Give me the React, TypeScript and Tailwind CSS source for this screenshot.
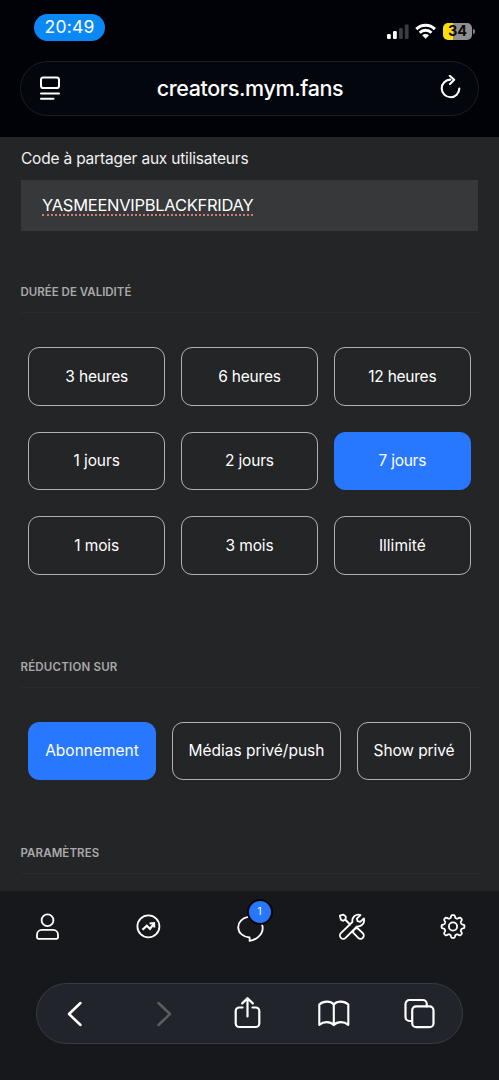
import React from "react";

const SANS = "font-['Inter','Liberation_Sans',sans-serif]";

const line = {
  fill: "none",
  stroke: "#fff",
  strokeLinecap: "round" as const,
  strokeLinejoin: "round" as const,
};

const gearPath = (() => {
  const points: string[] = [];
  for (let i = 0; i < 160; i++) {
    const a = (i / 160) * Math.PI * 2;
    const r = 10.1 + 1.4 * Math.tanh(2 * Math.cos(8 * a));
    points.push(`${(14 + r * Math.sin(a)).toFixed(2)} ${(14 - r * Math.cos(a)).toFixed(2)}`);
  }
  return `M${points.join("L")}Z`;
})();

function StatusBar() {
  return (
    <div className="flex h-[60.5px] items-start justify-between pl-[34px] pr-[24px]">
      <div className="mt-[14px] flex h-[27px] w-[71px] items-center justify-center rounded-full bg-[#0a88f5] text-[17.5px] tracking-[0.2px] text-white">
        20:49
      </div>
      <div className="mt-[22px] flex items-center">
        <svg width="24" height="18" viewBox="0 0 24 18">
          <rect x="0" y="12" width="3.8" height="5" rx="1.2" fill="#fff" />
          <rect x="6" y="9" width="3.8" height="8" rx="1.2" fill="#fff" />
          <rect x="12" y="6" width="3.8" height="11" rx="1.2" fill="#3b3c3f" />
          <rect x="17.8" y="2.5" width="3.8" height="14.5" rx="1.2" fill="#3b3c3f" />
        </svg>
        <svg className="ml-[4px]" width="22" height="18" viewBox="0 0 22 18">
          <g fill="none" stroke="#fff" strokeWidth="2.9">
            <path d="M1.3 7.1a13.2 13.2 0 0 1 18.6 0" />
            <path d="M4.7 10.7a8.3 8.3 0 0 1 11.8 0" />
          </g>
          <path d="M7.2 13.3a4.9 4.9 0 0 1 6.8 0L10.6 16.8Z" fill="#fff" />
        </svg>
        <div className="ml-[6px] flex h-[17px] w-[29px] items-center justify-center rounded-[5px] bg-linear-to-r from-[#ffdc0c] from-36% to-[#8f8f91] to-36% text-[14.5px] font-bold leading-none text-[#0b0b0b]">
          34
        </div>
        <div className="ml-px h-[5px] w-[2px] rounded-r-full bg-[#858587]" />
      </div>
    </div>
  );
}

function AddressBar() {
  return (
    <div className="mx-[20px] flex h-[55.5px] items-center justify-between rounded-full border border-[#1b1e23] bg-[#03060d] pl-[18px] pr-[17px]">
      <svg width="22" height="26" viewBox="0 0 22 26" {...line} strokeWidth="2">
        <rect x="2" y="2.4" width="18" height="10.7" rx="2.4" />
        <path d="M2 18.4h18M2 23.7h12.5" />
      </svg>
      <span className="text-[21.5px] font-medium tracking-[-0.38px] text-white">creators.mym.fans</span>
      <svg width="22" height="26" viewBox="0 0 22 26" {...line} strokeWidth="2.1">
        <path d="M11.4 4.600A8.8 8.8 0 1 0 20.3 13.500" />
        <path d="M10.8 .8l4.400 4-4.200 4.100" />
      </svg>
    </div>
  );
}

function SectionTitle({ children, tracking }: { children: React.ReactNode; tracking: string }) {
  return (
    <h2 className={`-ml-[0.5px] h-[32px] border-b border-[#2a2b2d] text-[11.5px] font-semibold leading-[22px] text-[#a9a9ab] ${tracking}`}>
      {children}
    </h2>
  );
}

function Choice({ label, active, className = "" }: { label: string; active?: boolean; className?: string }) {
  return (
    <button
      className={`flex h-[58.5px] items-center justify-center rounded-[11px] border text-[15.5px] text-white ${
        active ? "border-[#2878ff] bg-[#2878ff]" : "border-[#b0b1b2]"
      } ${className}`}
    >
      {label}
    </button>
  );
}

const durations = [
  { label: "3 heures", tracking: "tracking-[-0.18px]" },
  { label: "6 heures", tracking: "tracking-[-0.18px]" },
  { label: "12 heures", tracking: "tracking-[-0.25px]" },
  { label: "1 jours", tracking: "tracking-[-0.1px]" },
  { label: "2 jours", tracking: "tracking-[-0.18px]" },
  { label: "7 jours", tracking: "tracking-[-0.25px]" },
  { label: "1 mois", tracking: "tracking-[-0.1px]" },
  { label: "3 mois", tracking: "tracking-[-0.1px]" },
  { label: "Illimité", tracking: "tracking-[0px]" },
];

function Content() {
  return (
    <main className="flex h-[753.5px] flex-col overflow-hidden bg-[#242527] px-[21px]">
      <label className="mt-[10px] h-[24px] whitespace-nowrap text-[15.5px] leading-[24px] tracking-[-0.2px] text-[#f1f1f1]">
        Code à partager aux utilisateurs
      </label>
      <div className="mt-[9px] flex h-[51px] items-center bg-[#37383a] pl-[21px]">
        <span className="border-b-2 border-dotted border-[#cf7d76] text-[16.5px] leading-[18px] tracking-[-0.27px] text-white">
          YASMEENVIPBLACKFRIDAY
        </span>
      </div>
      <div className="mt-[50px]">
        <SectionTitle tracking="tracking-[0px]">DURÉE DE VALIDITÉ</SectionTitle>
      </div>
      <div className="mx-[7px] mt-[34px] grid grid-cols-3 gap-x-[15.5px] gap-y-[26px]">
        {durations.map(({ label, tracking }) => (
          <Choice key={label} label={label} active={label === "7 jours"} className={tracking} />
        ))}
      </div>
      <div className="mt-[81px]">
        <SectionTitle tracking="tracking-[0.2px]">RÉDUCTION SUR</SectionTitle>
      </div>
      <div className="mx-[7px] mt-[34px] flex justify-between whitespace-nowrap">
        <Choice label="Abonnement" active className="w-[128px]" />
        <Choice label="Médias privé/push" className="w-[169px]" />
        <Choice label="Show privé" className="w-[114px] tracking-[-0.1px]" />
      </div>
      <div className="mt-[62px]">
        <SectionTitle tracking="tracking-[0.1px]">PARAMÈTRES</SectionTitle>
      </div>
    </main>
  );
}

function TabBar() {
  return (
    <nav className="flex h-[72px] items-center justify-between pl-[33px] pr-[32px]">
      <svg width="28" height="28" viewBox="0 0 28 28" {...line} strokeWidth="1.8">
        <circle cx="14.5" cy="7.3" r="5.9" />
        <path d="M8.8 16.9h11.4a4.8 4.8 0 0 1 4.8 4.8v2.6a1.5 1.5 0 0 1-1.5 1.5h-18A1.5 1.5 0 0 1 4 24.3v-2.6a4.8 4.8 0 0 1 4.8-4.8Z" />
      </svg>
      <svg width="28" height="28" viewBox="0 0 28 28" {...line} strokeWidth="1.8">
        <circle cx="13.4" cy="13.4" r="11" />
        <path d="M7.5 16.8l4.3-4.1 3.2 3.1 3.500-4.600" strokeWidth="2.2" strokeLinecap="butt" strokeLinejoin="miter" />
        <path d="M14.600 10.500l4.500-.4.200 4.400" strokeWidth="2" strokeLinejoin="miter" strokeLinecap="butt" />
      </svg>
      <div className="relative">
        <svg className="overflow-visible" width="28" height="28" viewBox="0 0 28 28" {...line} strokeWidth="1.8">
          <path d="M12.3 3.9C6.7 4.7 2.2 9.100 2.2 14.200c0 5.800 5.300 9.900 11.400 10.300v3.400c6.600-1 13.100-5.900 13.100-12.900 0-1.100-.2-2.200-.6-3.200" />
        </svg>
        <span className="absolute -top-[14px] left-[10.5px] flex size-[26px] items-center justify-center rounded-full border-2 border-[#04060c] bg-[#2878ff] text-[10px] text-white">
          1
        </span>
      </div>
      <svg width="28" height="28" viewBox="0 0 28 28" {...line} strokeWidth="1.8">
        <path d="M1.8 2.6l3.700-1 2.300 2-.2 2.700-2.300 1.500-2.300-.9L1.800 2.600ZM7.100 6.500l5 5" />
        <path d="M17.5 15.800l1.800-.8 5.500 5.200a3.200 3.200 0 0 1-4.600 4.700l-5.300-5.500.8-2" />
        <path d="M22.500 2.100c-4.400-1.500-8.800 1.700-8.100 6.900L2.900 20.100a3.300 3.300 0 0 0 4.700 4.700l11.300-11.300c4.600.6 8.200-3.400 7-8l-3.700 3.300-2.600-.6-.8-2.600Z" />
      </svg>
      <svg width="28" height="28" viewBox="0 0 28 28" {...line} strokeWidth="1.8">
        <path d={gearPath} transform="translate(0 -0.5)" />
        <circle cx="14" cy="13.5" r="4.1" />
      </svg>
    </nav>
  );
}

function BrowserToolbar() {
  return (
    <div className="mx-[36px] mt-[20.5px] flex h-[61px] items-center justify-between rounded-full border border-[#383b40] bg-[#21242a] pl-[19px] pr-[25px]">
      <svg width="36" height="36" viewBox="0 0 36 36" {...line} strokeWidth="2.5">
        <path d="M24.5 7L13 18l11.500 11" />
      </svg>
      <svg width="36" height="36" viewBox="0 0 36 36" {...line} stroke="#5b5d62" strokeWidth="2.5">
        <path d="M16.500 7L28 18 16.500 29" />
      </svg>
      <svg width="36" height="36" viewBox="0 0 36 36" {...line} strokeWidth="2.2">
        <path d="M13.5 11.500h-3.200a3.600 3.600 0 0 0-3.600 3.600v12.300a3.600 3.600 0 0 0 3.600 3.600h16.400a3.600 3.600 0 0 0 3.600-3.600V15.100a3.600 3.600 0 0 0-3.600-3.600h-3.200M18.500 20.500V2.200M13.200 7.400L18.500 2.200l5.300 5.200" />
      </svg>
      <svg width="36" height="36" viewBox="0 0 36 36" {...line} strokeWidth="2.1">
        <path d="M18.800 8.500C15.600 4.700 8.300 4.700 4.300 8.600v20.300c4.300-3.700 11-3.700 14.500.2 3.500-3.900 10.200-3.900 14.500-.2V8.600C29.300 4.700 22 4.700 18.800 8.500ZM18.800 8.500v20.600" />
      </svg>
      <svg width="36" height="36" viewBox="0 0 36 36" {...line} strokeWidth="2.2">
        <path d="M11 25H8.500A4 4 0 0 1 4.500 21V8a4 4 0 0 1 4-4h13.300a4 4 0 0 1 4 4v2.300" />
        <rect x="11.200" y="10.400" width="21.300" height="20.800" rx="4" />
      </svg>
    </div>
  );
}

export default function App() {
  return (
    <div className={`flex h-[1080px] w-[499px] flex-col overflow-hidden bg-[#17181c] ${SANS}`}>
      <header className="h-[137px] bg-[#010207]">
        <StatusBar />
        <AddressBar />
      </header>
      <Content />
      <TabBar />
      <BrowserToolbar />
    </div>
  );
}
